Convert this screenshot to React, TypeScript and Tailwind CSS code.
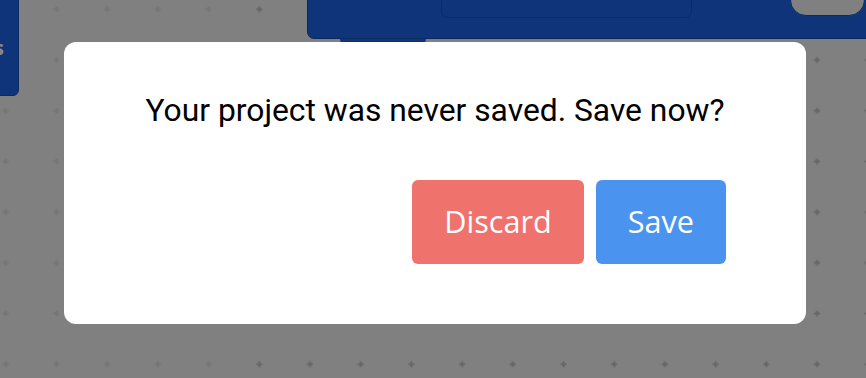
export default function App() {
	return (
		<div className="relative w-[866px] h-[378px] overflow-hidden bg-[#808080]">
			{/* workspace grid */}
			<svg className="absolute inset-0" width="866" height="378">
				<defs>
					<pattern
						id="grid"
						x="-19.55"
						y="-16.05"
						width="50.7"
						height="50.7"
						patternUnits="userSpaceOnUse">
						<path
							d="M22.35 25.35h6M25.35 22.35v6"
							stroke="#656565"
							strokeWidth="2"
						/>
					</pattern>
				</defs>
				<rect width="866" height="378" fill="url(#grid)" />
				<rect width="232" height="378" fill="#808080" opacity="0.6" />
			</svg>

			{/* blocks behind the dialog */}
			<div className="absolute left-[-20px] top-[-10px] w-[39px] h-[106px] rounded-[6px] bg-[#103479] border border-[#0b2a62]">
				<span className="absolute left-[13px] top-[47px] text-[20px] leading-none font-bold text-[#8a8a8a] font-['Open_Sans',sans-serif]">
					s
				</span>
			</div>
			<div className="absolute left-[307px] top-[-20px] w-[580px] h-[59px] rounded-[7px] bg-[#103479] border border-[#0b2a62]">
				<div className="absolute left-[32px] top-[58px] w-[86px] h-[6px] rounded-b-[6px] bg-[#103479]" />
				<div className="absolute left-[133px] top-[-10px] w-[251px] h-[47px] rounded-[7px] border border-[#0b2a62]" />
				<div className="absolute left-[482px] top-[-30px] w-[75px] h-[65px] rounded-[16px] bg-[#808080] border border-[#0b2a62]" />
			</div>

			{/* dialog */}
			<div className="absolute inset-0 pl-[64px] pt-[42px]">
				<div className="w-[742px] h-[282px] rounded-xl bg-white flex flex-col pt-[49px]">
					<p className="whitespace-nowrap text-center text-[31.8px] leading-[38px] text-black font-['Roboto',sans-serif]">
						Your project was never saved. Save now?
					</p>
					<div className="mt-[51px] pr-[80px] flex justify-end gap-3">
						<button className="h-[84px] px-8 rounded-[6px] bg-[#ef726d] text-white text-[30.6px] font-['Open_Sans',sans-serif] flex items-center justify-center">
							Discard
						</button>
						<button className="h-[84px] px-8 rounded-[6px] bg-[#4a94ef] text-white text-[30.6px] font-['Open_Sans',sans-serif] flex items-center justify-center">
							Save
						</button>
					</div>
				</div>
			</div>
		</div>
	)
}
